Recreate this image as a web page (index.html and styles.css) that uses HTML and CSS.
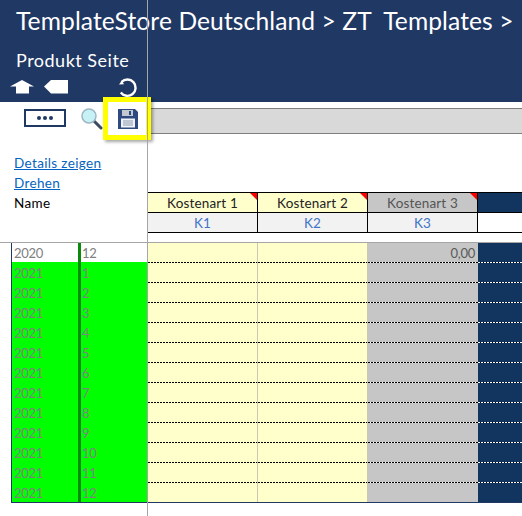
FILE: index.html
```html
<!DOCTYPE html>
<html lang="de">
<head>
<meta charset="utf-8">
<title>Produkt Seite</title>
<link rel="stylesheet" href="styles.css">
</head>
<body>
<div class="page">
  <header class="banner">
    <div class="title">TemplateStore Deutschland &gt; ZT&nbsp; Templates &gt;</div>
    <div class="subtitle">Produkt Seite</div>
    <div class="nav">
      <svg class="nav-up" width="24" height="14" viewBox="0 0 24 14"><path d="M12 0 24 6.500H19V13.500H6V6.500H0Z" fill="#fff"/></svg>
      <svg class="nav-back" width="24" height="14" viewBox="0 0 24 14"><path d="M0 6.500 7 0H24V13.500H7Z" fill="#fff"/></svg>
      <svg class="nav-refresh" width="20" height="20" viewBox="0 0 20 20"><path d="M3.500 4A8.200 8.200 0 1 1 2.800 14.500" fill="none" stroke="#fff" stroke-width="2.400"/><path d="M1 6.500 6 6.200 3.800 2.500Z" fill="#fff"/></svg>
    </div>
  </header>

  <div class="toolbar">
    <div class="more"><span></span><span></span><span></span></div>
    <svg class="lens" width="22" height="22" viewBox="0 0 22 22">
      <path d="M13 13 20 20" stroke="#3b4a63" stroke-width="3" stroke-linecap="round"/>
      <circle cx="8" cy="8" r="7" fill="#c6f2f5" stroke="#9cb6c4" stroke-width="1.500"/>
    </svg>
    <svg class="disk" width="20" height="20" viewBox="0 0 20 20">
      <path d="M0 0H17L20 3V20H0Z" fill="#2f4a80"/>
      <rect x="4" y="1" width="11" height="6" fill="#c4c8d0"/>
      <rect x="11" y="2" width="2" height="4" fill="#2f4a80"/>
      <rect x="3" y="9.500" width="14" height="9" fill="#f2f3f6"/>
      <path d="M5 12H15M5 14H15M5 16H15" stroke="#8c9ab5" stroke-width="1"/>
    </svg>
    <div class="formula"></div>
    <div class="highlight"></div>
  </div>

  <section class="head">
    <div class="labels">
      <a class="link" href="#">Details zeigen</a>
      <a class="link" href="#">Drehen</a>
      <div class="label">Name</div>
    </div>
    <div class="columns">
      <div class="col-name tint-yellow">Kostenart 1</div>
      <div class="col-name tint-yellow">Kostenart 2</div>
      <div class="col-name tint-grey">Kostenart 3</div>
      <div class="col-name tint-navy"></div>
      <div class="col-code">K1</div>
      <div class="col-code">K2</div>
      <div class="col-code">K3</div>
      <div class="col-code"></div>
    </div>
  </section>

  <section class="sheet">
    <div class="year">2020</div><div class="bar"></div><div class="month">12</div><div class="yel"></div><div class="yel"></div><div class="gry">0,00</div><div class="nvy"></div>
    <div class="year on">2021</div><div class="bar"></div><div class="month on">1</div><div class="yel dash"></div><div class="yel dash"></div><div class="gry dash"></div><div class="nvy dash"></div>
    <div class="year on">2021</div><div class="bar"></div><div class="month on">2</div><div class="yel dash"></div><div class="yel dash"></div><div class="gry dash"></div><div class="nvy dash"></div>
    <div class="year on">2021</div><div class="bar"></div><div class="month on">3</div><div class="yel dash"></div><div class="yel dash"></div><div class="gry dash"></div><div class="nvy dash"></div>
    <div class="year on">2021</div><div class="bar"></div><div class="month on">4</div><div class="yel dash"></div><div class="yel dash"></div><div class="gry dash"></div><div class="nvy dash"></div>
    <div class="year on">2021</div><div class="bar"></div><div class="month on">5</div><div class="yel dash"></div><div class="yel dash"></div><div class="gry dash"></div><div class="nvy dash"></div>
    <div class="year on">2021</div><div class="bar"></div><div class="month on">6</div><div class="yel dash"></div><div class="yel dash"></div><div class="gry dash"></div><div class="nvy dash"></div>
    <div class="year on">2021</div><div class="bar"></div><div class="month on">7</div><div class="yel dash"></div><div class="yel dash"></div><div class="gry dash"></div><div class="nvy dash"></div>
    <div class="year on">2021</div><div class="bar"></div><div class="month on">8</div><div class="yel dash"></div><div class="yel dash"></div><div class="gry dash"></div><div class="nvy dash"></div>
    <div class="year on">2021</div><div class="bar"></div><div class="month on">9</div><div class="yel dash"></div><div class="yel dash"></div><div class="gry dash"></div><div class="nvy dash"></div>
    <div class="year on">2021</div><div class="bar"></div><div class="month on">10</div><div class="yel dash"></div><div class="yel dash"></div><div class="gry dash"></div><div class="nvy dash"></div>
    <div class="year on">2021</div><div class="bar"></div><div class="month on">11</div><div class="yel dash"></div><div class="yel dash"></div><div class="gry dash"></div><div class="nvy dash"></div>
    <div class="year on">2021</div><div class="bar"></div><div class="month on">12</div><div class="yel dash"></div><div class="yel dash"></div><div class="gry dash"></div><div class="nvy dash"></div>
  </section>

  <div class="freeze"></div>
</div>
</body>
</html>
```
FILE: styles.css
```css
* { box-sizing: border-box; }
html, body { margin: 0; padding: 0; background: #fff; }
body { font-family: Lato, "Open Sans", sans-serif; overflow: hidden; }
.page { position: relative; width: 522px; height: 516px; overflow: hidden; }

.banner {
  height: 102px;
  background: #1f3864;
  color: #fff;
  padding: 6px 0 0 16px;
  white-space: nowrap;
  overflow: hidden;
}
.title { font-size: 24.600px; line-height: 30px; height: 30px; letter-spacing: 0.1px; }
.subtitle { font-size: 18px; line-height: 22px; margin-top: 13px; letter-spacing: 0.5px; }
.nav { display: flex; align-items: flex-start; margin-top: 7px; margin-left: -6px; }
.nav-up { margin-top: 2px; }
.nav-back { margin-top: 2px; margin-left: 10px; }
.nav-refresh { margin-left: 50px; }

.toolbar { position: relative; height: 50px; display: flex; align-items: flex-start; }
.more {
  width: 42px; height: 18px; margin: 7px 0 0 24px;
  border: 2px solid #1f3864;
  display: flex; align-items: center; justify-content: center; gap: 2px;
}
.more span { width: 4px; height: 4px; border-radius: 50%; background: #1f3864; }
.lens { margin: 6px 0 0 15px; }
.disk { margin: 7px 0 0 15px; position: relative; z-index: 2; }
.formula {
  position: absolute; left: 148px; right: 0; top: 6px; height: 26px;
  background: #d9d9d9;
  border-top: 1px solid #7f7f7f;
  border-bottom: 1px solid #7f7f7f;
}
.highlight {
  position: absolute; left: 103px; top: -5px; width: 48px; height: 43px;
  border: 5px solid #ffff00;
  box-shadow: 2px 2px 3px rgba(0,0,0,.35);
}

.head { display: flex; height: 91px; border-bottom: 1px solid #a6a6a6; }
.labels {
  width: 148px; flex: none; padding: 1px 0 0 14px;
  display: flex; flex-direction: column; align-items: flex-start;
  font-size: 13.500px; line-height: 20px; letter-spacing: 0.35px;
}
.link { color: #0563c1; text-decoration: underline; }
.label { color: #000; }
.columns {
  flex: 1; margin-top: 40px; height: 41px;
  display: grid;
  grid-template-columns: 110px 110px 110px 1fr;
  grid-template-rows: 20px 21px;
  font-size: 13.500px;
  text-align: center;
}
.col-name {
  position: relative;
  border-top: 1px solid #000;
  border-right: 1px solid #000;
  line-height: 21px;
  letter-spacing: 0.15px;
  color: #222;
}
.col-name:not(.tint-navy)::after {
  content: "";
  position: absolute; top: 0; right: 0;
  border-top: 7px solid #ff0000;
  border-left: 7px solid transparent;
}
.tint-yellow { background: #ffffcc; }
.tint-grey { background: #c6c6c6; color: #555; }
.tint-navy { background: #12355f; border-right: 0; }
.col-code {
  background: #f2f2f2;
  border-top: 1px solid #000;
  border-bottom: 1px solid #000;
  border-right: 1px solid #000;
  line-height: 20px;
  color: #3f74c8;
}
.col-code:last-child { border-right: 0; background: #fff; }

.sheet {
  margin-left: 11px;
  display: grid;
  grid-template-columns: 67px 3px 67px 110px 110px 110px 44px;
  grid-template-rows: 19px repeat(12, 20px);
  border-bottom: 1px solid #1f3864;
  font-size: 13px;
  color: #808080;
}
.year { border-left: 1px solid #1f3864; padding: 0 0 0 2px; line-height: 20px; letter-spacing: -0.25px; height: 19px; }
.month { padding: 0 0 0 1px; line-height: 20px; letter-spacing: -0.25px; height: 19px; }
.on { background: #00ff00; padding-top: 1px; height: 20px; }
.bar { background: #0a8a0a; }
.yel { background-color: #ffffcc; border-right: 1px solid #c8c8b4; }
.gry { background-color: #c6c6c6; color: #595959; text-align: right; padding: 0 3px 0 0; line-height: 20px; letter-spacing: -0.25px; }
.nvy { background-color: #12355f; }
.dash {
  background-repeat: no-repeat;
  background-size: 100% 1px;
  background-position: 0 0;
}
.yel.dash { background-image: repeating-linear-gradient(90deg, #000 0 2px, transparent 2px 3px); }
.gry.dash { background-image: repeating-linear-gradient(90deg, #000 0 2px, #fff 2px 3px); }
.nvy.dash { background-image: repeating-linear-gradient(90deg, #fff 0 2px, #000 2px 3px); }

.freeze {
  position: absolute; left: 147px; top: 0; bottom: 0; width: 1px;
  background: #a6a6a6;
}
```
